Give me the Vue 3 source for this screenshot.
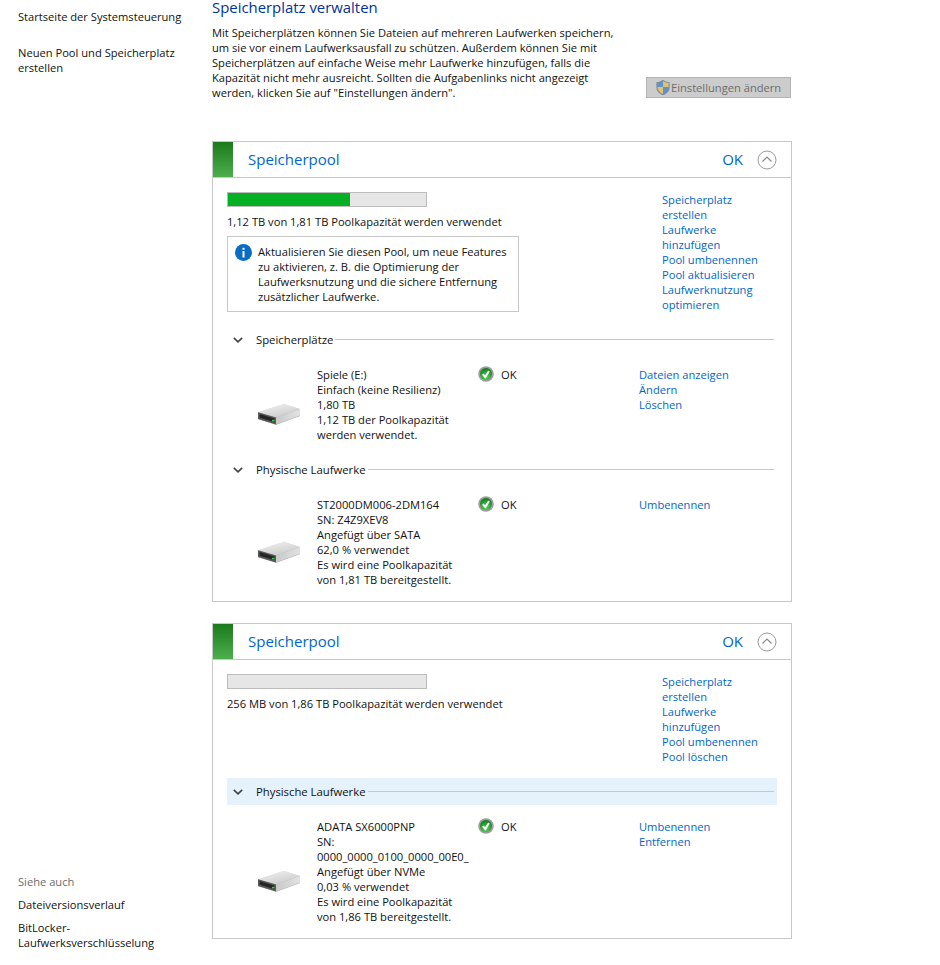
<script setup>
const pools = [
  {
    id: 1,
    used: 61.5,
    usage: "1,12 TB von 1,81 TB Poolkapazität werden verwendet",
    links: ["Speicherplatz", "erstellen", "Laufwerke", "hinzufügen", "Pool umbenennen", "Pool aktualisieren", "Laufwerknutzung", "optimieren"],
    notice: true,
    sections: [
      {
        title: "Speicherplätze",
        items: [
          {
            lines: ["Spiele (E:)", "Einfach (keine Resilienz)", "1,80 TB", "1,12 TB der Poolkapazität", "werden verwendet."],
            actions: ["Dateien anzeigen", "Ändern", "Löschen"],
          },
        ],
      },
      {
        title: "Physische Laufwerke",
        items: [
          {
            lines: ["ST2000DM006-2DM164", "SN: Z4Z9XEV8", "Angefügt über SATA", "62,0 % verwendet", "Es wird eine Poolkapazität", "von 1,81 TB bereitgestellt."],
            actions: ["Umbenennen"],
          },
        ],
      },
    ],
  },
  {
    id: 2,
    used: 0,
    usage: "256 MB von 1,86 TB Poolkapazität werden verwendet",
    links: ["Speicherplatz", "erstellen", "Laufwerke", "hinzufügen", "Pool umbenennen", "Pool löschen"],
    notice: false,
    sections: [
      {
        title: "Physische Laufwerke",
        active: true,
        items: [
          {
            lines: ["ADATA SX6000PNP", "SN:", "0000_0000_0100_0000_00E0_", "Angefügt über NVMe", "0,03 % verwendet", "Es wird eine Poolkapazität", "von 1,86 TB bereitgestellt."],
            actions: ["Umbenennen", "Entfernen"],
          },
        ],
      },
    ],
  },
];
</script>

<template>
  <div class="window">
    <aside class="sidebar">
      <nav class="side-top">
        <a>Startseite der Systemsteuerung</a>
        <a>Neuen Pool und Speicherplatz<br />erstellen</a>
      </nav>
      <div class="side-bottom">
        <p class="see-also">Siehe auch</p>
        <a>Dateiversionsverlauf</a>
        <a>BitLocker-<br />Laufwerksverschlüsselung</a>
      </div>
    </aside>

    <main class="content">
      <h1>Speicherplatz verwalten</h1>
      <div class="intro">
        <p>
          Mit Speicherplätzen können Sie Dateien auf mehreren Laufwerken speichern,<br />
          um sie vor einem Laufwerksausfall zu schützen. Außerdem können Sie mit<br />
          Speicherplätzen auf einfache Weise mehr Laufwerke hinzufügen, falls die<br />
          Kapazität nicht mehr ausreicht. Sollten die Aufgabenlinks nicht angezeigt<br />
          werden, klicken Sie auf "Einstellungen ändern".
        </p>
        <button type="button" class="settings" disabled>
          <svg width="16" height="17" viewBox="0 0 16 17">
            <path d="M8 .8C6 2.2 4 3 1.4 3.2v5.2c0 3.6 2.8 6.3 6.6 7.8 3.8-1.5 6.6-4.2 6.6-7.8V3.2C12 3 10 2.2 8 .8z" fill="#7d8a99" />
            <path d="M8 2v6H2.4V3.9C4.6 3.7 6.3 3 8 2z" fill="#5f93c9" />
            <path d="M8 2c1.7 1 3.4 1.7 5.6 1.9V8H8z" fill="#e2c272" />
            <path d="M2.4 8H8v7.1C5 13.8 2.6 11.5 2.4 8z" fill="#e2c272" />
            <path d="M8 8h5.6c-.2 3.5-2.6 5.8-5.6 7.1z" fill="#5f93c9" />
          </svg>
          <span>Einstellungen ändern</span>
        </button>
      </div>

      <section v-for="pool in pools" :key="pool.id" class="pool">
        <header class="pool-head">
          <div class="stripe"></div>
          <h2>Speicherpool</h2>
          <span class="pool-status">OK</span>
          <svg class="collapse" width="20" height="20" viewBox="0 0 20 20">
            <circle cx="10" cy="10" r="9" fill="none" stroke="#9a9a9a" />
            <path d="M5.5 11.5 10 7l4.5 4.5" fill="none" stroke="#8a8a8a" stroke-width="1.2" />
          </svg>
        </header>

        <div class="pool-body">
          <div class="summary">
            <div class="summary-left">
              <div class="bar">
                <div class="bar-fill" :style="{ width: pool.used + '%' }"></div>
              </div>
              <p class="usage">{{ pool.usage }}</p>
              <div v-if="pool.notice" class="notice">
                <svg width="17" height="17" viewBox="0 0 17 17">
                  <circle cx="8.5" cy="8.5" r="8.5" fill="#0b6cc4" />
                  <rect x="7.5" y="7" width="2" height="6.5" fill="#fff" />
                  <rect x="7.5" y="3.8" width="2" height="2" fill="#fff" />
                </svg>
                <p>
                  Aktualisieren Sie diesen Pool, um neue Features<br />
                  zu aktivieren, z. B. die Optimierung der<br />
                  Laufwerksnutzung und die sichere Entfernung<br />
                  zusätzlicher Laufwerke.
                </p>
              </div>
            </div>
            <div class="pool-links">
              <a v-for="(link, i) in pool.links" :key="i">{{ link }}</a>
            </div>
          </div>

          <div v-for="section in pool.sections" :key="section.title" class="section">
            <div class="section-head" :class="{ active: section.active }">
              <svg width="10" height="6" viewBox="0 0 10 6">
                <path d="M.8.8 5 4.8 9.2.8" fill="none" stroke="#444" stroke-width="1.6" />
              </svg>
              <span>{{ section.title }}</span>
              <i></i>
            </div>
            <div v-for="item in section.items" :key="item.lines[0]" class="item">
              <svg class="disk" width="46" height="24" viewBox="0 0 46 24">
                <defs>
                  <linearGradient :id="'top' + pool.id + section.title.length" x1="0" y1="0" x2="0.6" y2="1">
                    <stop offset="0" stop-color="#f4f4f4" />
                    <stop offset="1" stop-color="#cbcbcb" />
                  </linearGradient>
                  <linearGradient :id="'side' + pool.id + section.title.length" x1="0" y1="0" x2="1" y2="0">
                    <stop offset="0" stop-color="#c9c9c9" />
                    <stop offset="1" stop-color="#e2e2e2" />
                  </linearGradient>
                </defs>
                <path d="M2 10.5 27 2.5q1-.3 2 0L44 7.2V14L21 22.6q-1 .3-2 0L3 17.6q-1-.3-1-1z" fill="#a8a8a8" />
                <path d="M2 10.2 27 2q1-.3 2 0l15 5L20 15.5z" :fill="'url(#top' + pool.id + section.title.length + ')'" />
                <path d="M20 15.5 44 7v6.6L20 22.6z" :fill="'url(#side' + pool.id + section.title.length + ')'" />
                <path d="M2 10.2 20 15.5v7.1L2 17z" fill="#5a5a5a" />
                <path d="M3.6 12 18.5 16.4v3.8L3.6 15.8z" fill="#262626" />
                <rect x="16" y="17.8" width="2.5" height="1.6" fill="#2fd04a" />
              </svg>
              <div class="item-text">
                <div v-for="(line, i) in item.lines" :key="i">{{ line }}</div>
              </div>
              <div class="item-status">
                <svg width="16" height="16" viewBox="0 0 16 16">
                  <defs>
                    <radialGradient :id="'ok' + pool.id + section.title.length" cx="0.5" cy="0.75" r="0.7">
                      <stop offset="0" stop-color="#5fd15f" />
                      <stop offset="1" stop-color="#0f7f1a" />
                    </radialGradient>
                  </defs>
                  <circle cx="8" cy="8" r="7.8" fill="#9e9e9e" />
                  <circle cx="8" cy="8" r="6" :fill="'url(#ok' + pool.id + section.title.length + ')'" />
                  <path d="M4.8 8.2 7.2 11l3.8-6" fill="none" stroke="#fff" stroke-width="2" />
                </svg>
                <span>OK</span>
              </div>
              <div class="item-actions">
                <a v-for="action in item.actions" :key="action">{{ action }}</a>
              </div>
            </div>
          </div>
        </div>
      </section>
    </main>
  </div>
</template>

<style scoped>
.window {
  display: flex;
  height: 965px;
  overflow: hidden;
  font: 11.15px/15px "Open Sans", "Liberation Sans", sans-serif;
  color: #111;
  background: #fff;
}
p {
  margin: 0;
}
a {
  display: block;
  color: #0066cc;
}
.sidebar {
  width: 212px;
  flex: none;
  box-sizing: border-box;
  padding: 9px 0 15px 18px;
  display: flex;
  flex-direction: column;
  justify-content: space-between;
}
.side-top,
.side-bottom {
  display: flex;
  flex-direction: column;
}
.sidebar a {
  color: #111;
}
.side-top {
  gap: 21px;
}
.side-bottom {
  gap: 8px;
}
.see-also {
  color: #6d6d6d;
}
.content {
  width: 580px;
  flex: none;
}
h1 {
  margin: -1px 0 0;
  font-size: 14.9px;
  line-height: 16px;
  font-weight: 400;
  color: #003399;
}
.intro {
  display: flex;
  justify-content: space-between;
  align-items: flex-end;
  margin-top: 10px;
  white-space: nowrap;
}
.settings {
  width: 145px;
  height: 21px;
  margin: 0 1px 2px 0;
  padding: 0 0 0 8px;
  display: flex;
  align-items: center;
  background: #cccccc;
  border: 1px solid #b4b4b4;
  color: #6d6d6d;
  font: inherit;
}
.pool {
  border: 1px solid #c8c8c8;
  margin-top: 21px;
}
.intro + .pool {
  margin-top: 41px;
}
.pool-head {
  display: flex;
  align-items: center;
  height: 35px;
  border-bottom: 1px solid #c8c8c8;
}
.stripe {
  width: 20px;
  align-self: stretch;
  background: linear-gradient(#1c7a1c, #4caf4c);
}
h2 {
  margin: 0 0 0 15px;
  flex: 1;
  font-size: 15px;
  font-weight: 400;
  color: #0066cc;
}
.pool-status {
  font-size: 15px;
  color: #0066cc;
}
.collapse {
  margin: 0 14px;
}
.pool-body {
  padding: 14px 14px 1px;
}
.summary {
  display: flex;
  justify-content: space-between;
}
.bar {
  width: 198px;
  height: 13px;
  border: 1px solid #bcbcbc;
  background: #e6e6e6;
}
.bar-fill {
  height: 100%;
  background: #06b025;
}
.usage {
  margin-top: 7px;
}
.notice {
  display: flex;
  gap: 6px;
  width: 292px;
  height: 76px;
  box-sizing: border-box;
  margin-top: 7px;
  padding: 7px 7px;
  border: 1px solid #c8c8c8;
  white-space: nowrap;
}
.pool-links {
  width: 115px;
  padding: 0 0 2px;
}
.section {
  margin-top: 12px;
}
.section-head {
  display: flex;
  align-items: center;
  height: 27px;
  padding: 0 3px 0 6px;
  font-size: 11.3px;
}
.section-head.active {
  background: #e5f1fb;
}
.section-head span {
  margin-left: 13px;
}
.section-head i {
  flex: 1;
  height: 1px;
  margin-left: 2px;
  background: #c8c8c8;
}
.item {
  position: relative;
  display: flex;
  padding: 14px 0 13px 90px;
}
.disk {
  position: absolute;
  left: 29px;
  top: 50%;
  margin-top: -2px;
}
.item-text {
  width: 161px;
  white-space: nowrap;
  overflow: hidden;
}
.item-status {
  width: 161px;
  display: flex;
  align-items: flex-start;
  gap: 7px;
  margin-top: -1px;
}
.item-status span {
  margin-top: 1px;
}
.section + .section {
  margin-top: 1px;
}
</style>
